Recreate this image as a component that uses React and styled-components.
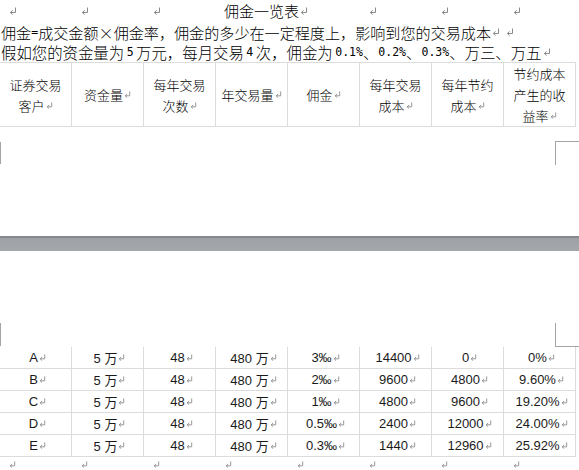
import React from 'react';
import styled, { createGlobalStyle } from 'styled-components';

const CJK = `"Noto Sans CJK SC", "Noto Sans", sans-serif`;
const ARIAL = `"Liberation Sans", Arial, "Noto Sans CJK SC", sans-serif`;

const intro = '佣金=成交金额×佣金率，佣金的多少在一定程度上，影响到您的交易成本';
const assume = '假如您的资金量为 5 万元，每月交易 4 次，佣金为 0.1%、0.2%、0.3%、万三、万五';

const headers = [
  ['证券交易', '客户'],
  ['资金量'],
  ['每年交易', '次数'],
  ['年交易量'],
  ['佣金'],
  ['每年交易', '成本'],
  ['每年节约', '成本'],
  ['节约成本', '产生的收', '益率'],
];

const rows = [
  ['A', '5 万', '48', '480 万', '3‰', '14400', '0', '0%'],
  ['B', '5 万', '48', '480 万', '2‰', '9600', '4800', '9.60%'],
  ['C', '5 万', '48', '480 万', '1‰', '4800', '9600', '19.20%'],
  ['D', '5 万', '48', '480 万', '0.5‰', '2400', '12000', '24.00%'],
  ['E', '5 万', '48', '480 万', '0.3‰', '1440', '12960', '25.92%'],
];

// Word paragraph mark
const Mark = ({ size = 8 }) => (
  <MarkSvg width={size} height={size} viewBox="0 0 8 8">
    <path d="M6.5 0.5V5.5H1.5" fill="none" stroke="currentColor" strokeWidth="1" />
    <path d="M3.6 3.4L1.3 5.5L3.6 7.6" fill="none" stroke="currentColor" strokeWidth="1" />
  </MarkSvg>
);

// SimSun-like spacing: ascii runs are half-width with narrow spaces, × is full-width
const Simsun = ({ text }) =>
  text.split(/([\x20-\x7e]+|×)/).filter(Boolean).map((part, i) => {
    if (part === '×') return <FullChar key={i}>×</FullChar>;
    if (/^[\x20-\x7e]+$/.test(part)) {
      return (
        <HalfRun key={i}>
          {part.split(/( )/).filter(Boolean).map((bit, k) =>
            bit === ' ' ? <Gap key={k} /> : bit
          )}
        </HalfRun>
      );
    }
    return <span key={i}>{part}</span>;
  });

const App = () => {
  return (
    <>
      <GlobalStyle />
      <Viewport>
        <Page $h={236}>
          <Row $h={21}>
            <IntroCell><Mark /></IntroCell>
            <IntroCell><Mark /></IntroCell>
            <IntroCell><Mark /></IntroCell>
            <IntroCell $span={2}>佣金一览表<Mark /></IntroCell>
            <IntroCell><Mark /></IntroCell>
            <IntroCell><Mark /></IntroCell>
            <IntroCell><Mark /></IntroCell>
            <EndCell><Mark /></EndCell>
          </Row>
          <Row $h={20}>
            <TextCell $span={7} $fs={15.1}><Simsun text={intro} /><Mark /></TextCell>
            <TextCell><Mark /></TextCell>
            <EndCell><Mark /></EndCell>
          </Row>
          <Row $h={21}>
            <TextCell $span={8}><Simsun text={assume} /><Mark /></TextCell>
            <EndCell><Mark /></EndCell>
          </Row>

          <Row $h={65}>
            {headers.map((lines, i) => (
              <HeadCell key={i}>
                {lines.map((line, j) => (
                  <HeadLine key={j}>
                    {line}
                    {j === lines.length - 1 && <Mark size={7} />}
                  </HeadLine>
                ))}
              </HeadCell>
            ))}
            <EndCell $top><Mark /></EndCell>
          </Row>

          <CropMark $left={0} $top={142} $h={22} />
          <CropMark $left={555} $top={141} $h={23} $w={24} $edge="top" />
        </Page>

        <PageGap />

        <Page $h={219} $pt={96}>
          <CropMark $left={0} $top={72} $h={23} />
          <CropMark $left={555} $top={72} $h={23} $w={24} $edge="bottom" />

          {rows.map((row, i) => (
            <Row key={i} $h={22}>
              {row.map((val, j) => (
                <DataCell key={j}>
                  {val}
                  <Mark size={7} />
                </DataCell>
              ))}
              <EndCell><Mark size={7} /></EndCell>
            </Row>
          ))}

          <Row $h={14}>
            {Array.from({ length: 8 }).map((_, i) => (
              <IntroCell key={i}><Mark size={7} /></IntroCell>
            ))}
          </Row>
        </Page>
      </Viewport>
    </>
  );
};

const GlobalStyle = createGlobalStyle`
  html, body {
    margin: 0;
    padding: 0;
    background: #fff;
    overflow: hidden;
  }
`;

const Viewport = styled.div`
  width: 579px;
  height: 470px;
  overflow: hidden;
  display: flex;
  flex-direction: column;
  font-family: ${CJK};
  color: #000;
`;

const Page = styled.section`
  position: relative;
  flex: none;
  box-sizing: border-box;
  height: ${p => p.$h}px;
  padding-top: ${p => p.$pt || 0}px;
  background: #fff;
`;

const PageGap = styled.div`
  flex: none;
  height: 15px;
  background: linear-gradient(#868a8e 0, #868a8e 2px, #9ea1a5 2px, #a4a7ab 100%);
`;

const Row = styled.div`
  display: grid;
  grid-template-columns: repeat(8, 72px) 1fr;
  height: ${p => p.$h}px;
`;

const MarkSvg = styled.svg`
  flex: none;
  display: inline-block;
  color: #8a8a8a;
  margin-left: 1px;
  vertical-align: baseline;
`;

const IntroCell = styled.div`
  grid-column: span ${p => p.$span || 1};
  display: flex;
  align-items: center;
  padding-left: 8px;
  font-size: 15px;
  font-weight: 300;
  white-space: nowrap;
`;

const TextCell = styled.div`
  grid-column: span ${p => p.$span || 1};
  display: flex;
  align-items: center;
  padding-left: 1px;
  font-size: ${p => p.$fs || 15.4}px;
  font-weight: 300;
  white-space: nowrap;
`;

const HalfRun = styled.span`
  font-family: "DejaVu Sans Mono", monospace;
  font-size: 11.5px;
  font-weight: 400;
  white-space: pre;
`;

const Gap = styled.span`
  display: inline-block;
  width: 2.5px;
`;

const FullChar = styled.span`
  display: inline-block;
  width: 1em;
  text-align: center;
`;

const EndCell = styled.div`
  display: flex;
  align-items: ${p => (p.$top ? 'flex-start' : 'center')};
  padding-top: ${p => (p.$top ? '8px' : '0')};
  padding-left: 1px;
  overflow: hidden;
`;

const HeadCell = styled.div`
  box-sizing: border-box;
  display: flex;
  flex-direction: column;
  align-items: center;
  justify-content: center;
  border-top: 1px solid #dcdcdc;
  border-bottom: 1px solid #dcdcdc;
  border-right: 1px solid #dcdcdc;
  font-size: 13px;
  font-weight: 300;
`;

const HeadLine = styled.div`
  display: flex;
  align-items: center;
  line-height: 21px;
  white-space: nowrap;
`;

const DataCell = styled.div`
  box-sizing: border-box;
  display: flex;
  align-items: center;
  justify-content: center;
  padding-left: 4px;
  border-bottom: 1px solid #dcdcdc;
  border-right: 1px solid #dcdcdc;
  font-family: ${ARIAL};
  font-size: 13px;
  color: #1a1a1a;
  white-space: nowrap;
`;

const CropMark = styled.div`
  position: absolute;
  left: ${p => p.$left}px;
  top: ${p => p.$top}px;
  width: ${p => p.$w || 0}px;
  height: ${p => p.$h}px;
  border-left: 1px solid #a4a4a4;
  border-top: ${p => (p.$edge === 'top' ? '1px solid #a4a4a4' : 'none')};
  border-bottom: ${p => (p.$edge === 'bottom' ? '1px solid #a4a4a4' : 'none')};
`;

export default App;
